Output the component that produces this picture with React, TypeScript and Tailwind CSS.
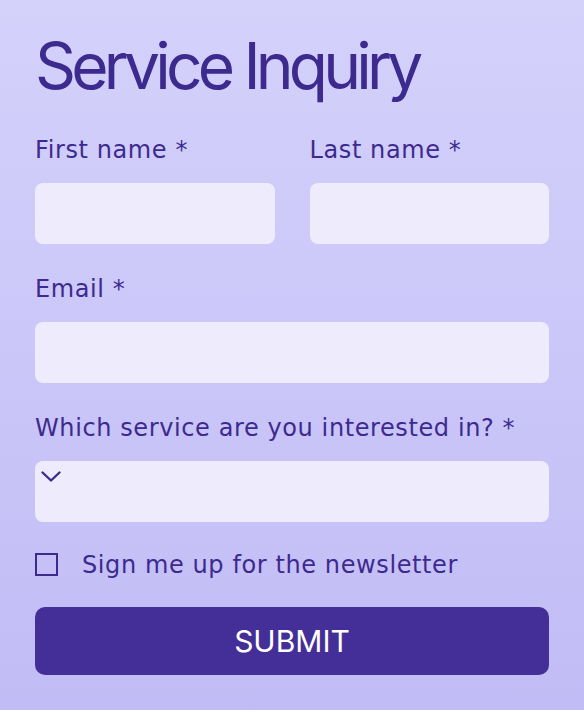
import React from "react";

const labelCls =
  "block h-[28px] text-[24px] leading-[32px] text-[#3d2a8f] tracking-[0.025em]";
const inputCls =
  "block w-full h-[61px] rounded-[8px] bg-[#eeecfc] border-0 outline-none";

export default function App() {
  return (
    <div
      className="w-[584px] h-[710px] bg-gradient-to-b from-[#d4d1fb] to-[#c1bcf5] px-[35px] pt-[34px]"
      style={{ fontFamily: '"DejaVu Sans", sans-serif' }}
    >
      <h1
        className="text-[64px] leading-[64px] text-[#3d2a8f] tracking-[-0.075em] font-normal"
        style={{ fontFamily: "Inter, sans-serif" }}
      >
        Service Inquiry
      </h1>
      <div className="mt-[36px] grid grid-cols-2 gap-x-[35px]">
        <div className="flex flex-col gap-[21px]">
          <label className={labelCls}>First name *</label>
          <input className={inputCls} />
        </div>
        <div className="flex flex-col gap-[21px]">
          <label className={labelCls}>Last name *</label>
          <input className={inputCls} />
        </div>
      </div>
      <div className="mt-[29px] flex flex-col gap-[21px]">
        <label className={labelCls}>Email *</label>
        <input className={inputCls} />
      </div>
      <div className="mt-[29px] flex flex-col gap-[21px]">
        <label className={labelCls}>Which service are you interested in? *</label>
        <div className="relative h-[61px] rounded-[8px] bg-[#eeecfc]">
          <svg
            className="absolute left-[5px] top-[8px]"
            width="22"
            height="16"
            viewBox="0 0 22 16"
            fill="none"
          >
            <polyline
              points="2.5,3.5 11,11.5 19.5,3.5"
              stroke="#3d2a8f"
              strokeWidth="2.4"
              strokeLinecap="round"
              strokeLinejoin="round"
            />
          </svg>
        </div>
      </div>
      <div className="mt-[31px] flex items-center gap-[24px] h-[23px]">
        <span className="block w-[23px] h-[23px] border-2 border-[#3d2a8f]" />
        <span className="text-[24px] leading-[28px] text-[#3d2a8f] tracking-[0.025em]">
          Sign me up for the newsletter
        </span>
      </div>
      <button
        className="mt-[31px] w-full h-[68px] rounded-[10px] bg-[#442e98] text-white text-[30px]"
        style={{ fontFamily: "Inter, sans-serif" }}
      >
        SUBMIT
      </button>
    </div>
  );
}
